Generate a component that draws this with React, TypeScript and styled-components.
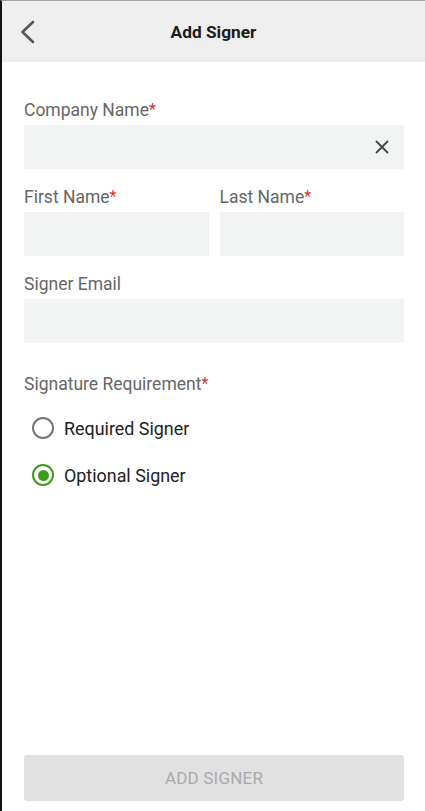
import React, { useState } from "react";
import styled, { createGlobalStyle } from "styled-components";

const Global = createGlobalStyle`
  html, body { margin: 0; padding: 0; background: #ffffff; }
  * { box-sizing: border-box; }
  body { font-family: Roboto, "Noto Sans", Arial, sans-serif; }
`;

const Page = styled.div`
  width: 425px;
  height: 811px;
  display: flex;
  flex-direction: column;
  border-left: 2px solid #111111;
  border-top: 1px solid #a3a3a3;
  background: #ffffff;
`;

const Header = styled.header`
  height: 61px;
  flex: none;
  background: #eeeeee;
  display: grid;
  grid-template-columns: 56px 1fr 56px;
  align-items: center;
`;

const BackButton = styled.button`
  border: 0;
  background: transparent;
  padding: 0 0 0 17px;
  height: 100%;
  display: flex;
  align-items: center;
  cursor: pointer;
`;

const Title = styled.h1`
  margin: 0;
  text-align: center;
  font-size: 17.3px;
  font-weight: 700;
  color: #1b1b1b;
`;

const Form = styled.form`
  flex: 1;
  display: flex;
  flex-direction: column;
  padding: 38px 21px 10px 22px;
`;

const Field = styled.div`
  display: flex;
  flex-direction: column;
  flex: 1;
  min-width: 0;
`;

const Row = styled.div<{ $gap?: number }>`
  display: flex;
  gap: 11px;
  margin-top: ${(p) => p.$gap ?? 18}px;
`;

const Label = styled.label`
  font-size: 17.5px;
  line-height: 20px;
  color: #666666;
  margin-bottom: 5px;
`;

const Star = styled.span`
  color: #d32f2f;
  font-size: 16px;
  vertical-align: 1px;
`;

const InputWrap = styled.div`
  height: 44px;
  background: #f2f4f4;
  display: flex;
  align-items: center;
`;

const Input = styled.input`
  border: 0;
  outline: none;
  background: transparent;
  height: 100%;
  width: 100%;
  padding: 0 12px;
  font-size: 17px;
  font-family: inherit;
  color: #222;
`;

const ClearButton = styled.button`
  border: 0;
  background: transparent;
  width: 40px;
  height: 100%;
  flex: none;
  display: flex;
  align-items: center;
  justify-content: center;
  padding: 0 4px 0 0;
  cursor: pointer;
`;

const GroupLabel = styled(Label)`
  margin-top: 31px;
  margin-bottom: 12px;
`;

const RadioGroup = styled.div`
  display: flex;
  flex-direction: column;
  gap: 3px;
  padding-left: 8px;
`;

const RadioRow = styled.label`
  height: 44px;
  display: flex;
  align-items: center;
  gap: 10px;
  cursor: pointer;
  font-size: 17.9px;
  color: #222222;
`;

const RadioCircle = styled.span<{ $on: boolean }>`
  width: 22px;
  height: 22px;
  border-radius: 50%;
  border: 2px solid ${(p) => (p.$on ? "#3b9b1d" : "#767676")};
  display: flex;
  align-items: center;
  justify-content: center;
  &::after {
    content: "";
    width: 11px;
    height: 11px;
    border-radius: 50%;
    background: ${(p) => (p.$on ? "#3b9b1d" : "transparent")};
  }
`;

const Footer = styled.div`
  margin-top: auto;
`;

const SubmitButton = styled.button`
  width: 100%;
  height: 46px;
  border: 0;
  border-radius: 3px;
  background: #e1e1e2;
  color: #aaaaae;
  font-family: inherit;
  font-size: 17px;
  letter-spacing: 0.2px;
`;

export default function App() {
  const [choice, setChoice] = useState<"required" | "optional">("optional");
  return (
    <>
      <Global />
      <Page>
        <Header>
          <BackButton aria-label="Back">
            <svg width="16" height="24" viewBox="0 0 16 24">
              <path d="M14 2 L3.5 12 L14 22" fill="none" stroke="#555555" strokeWidth="2.6" strokeLinecap="round" strokeLinejoin="round" />
            </svg>
          </BackButton>
          <Title>Add Signer</Title>
          <span />
        </Header>
        <Form onSubmit={(e) => e.preventDefault()}>
          <Row $gap={0}>
            <Field>
              <Label>
                Company Name<Star>*</Star>
              </Label>
              <InputWrap>
                <Input />
                <ClearButton type="button" aria-label="Clear">
                  <svg width="14" height="14" viewBox="0 0 14 14">
                    <path d="M1.5 1.5 L12.5 12.5 M12.5 1.5 L1.5 12.5" stroke="#454545" strokeWidth="1.8" strokeLinecap="round" />
                  </svg>
                </ClearButton>
              </InputWrap>
            </Field>
          </Row>
          <Row>
            <Field>
              <Label>
                First Name<Star>*</Star>
              </Label>
              <InputWrap>
                <Input />
              </InputWrap>
            </Field>
            <Field>
              <Label>
                Last Name<Star>*</Star>
              </Label>
              <InputWrap>
                <Input />
              </InputWrap>
            </Field>
          </Row>
          <Row>
            <Field>
              <Label>Signer Email</Label>
              <InputWrap>
                <Input />
              </InputWrap>
            </Field>
          </Row>
          <GroupLabel>
            Signature Requirement<Star>*</Star>
          </GroupLabel>
          <RadioGroup>
            <RadioRow onClick={() => setChoice("required")}>
              <RadioCircle $on={choice === "required"} />
              Required Signer
            </RadioRow>
            <RadioRow onClick={() => setChoice("optional")}>
              <RadioCircle $on={choice === "optional"} />
              Optional Signer
            </RadioRow>
          </RadioGroup>
          <Footer>
            <SubmitButton type="submit" disabled>
              ADD SIGNER
            </SubmitButton>
          </Footer>
        </Form>
      </Page>
    </>
  );
}
